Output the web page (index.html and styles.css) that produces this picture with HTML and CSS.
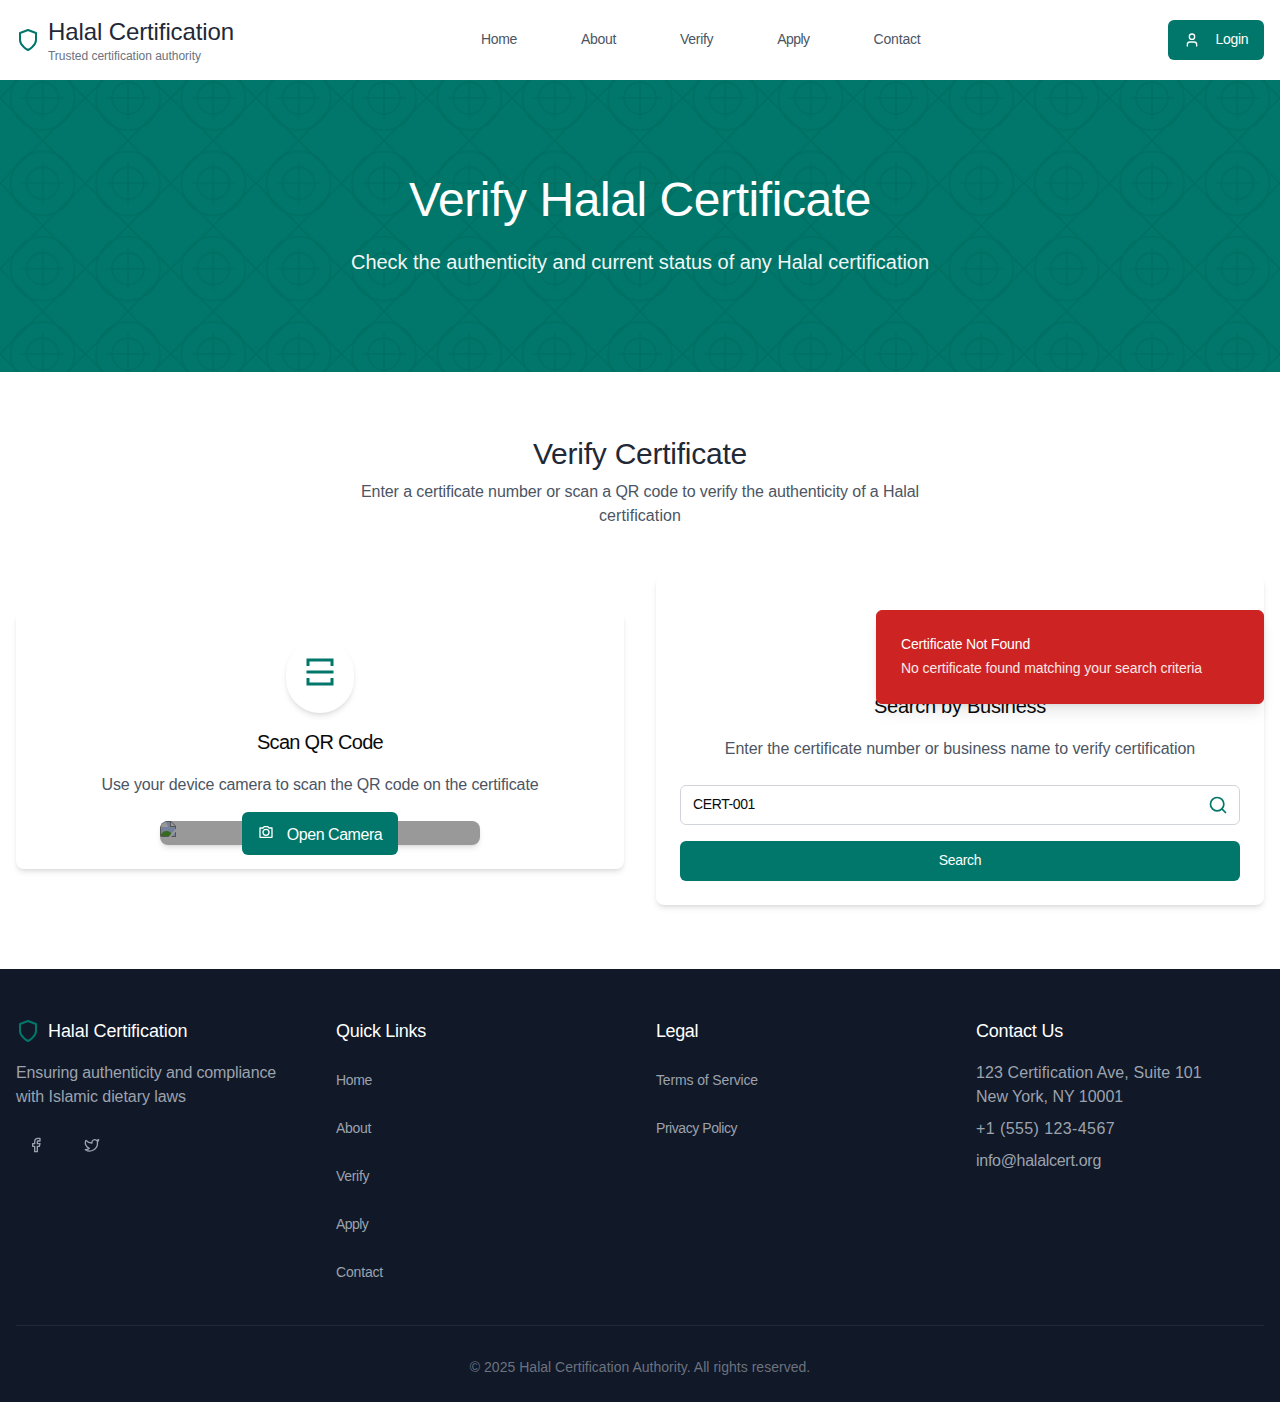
FILE: index.html
```html
<!DOCTYPE html>
<html lang="en">
<head>
<meta charset="utf-8">
<title>Verify Halal Certificate</title>
<link rel="stylesheet" href="styles.css">
</head>
<body>
<svg width="0" height="0" class="sprite" aria-hidden="true">
  <symbol id="shield" viewBox="0 0 24 24"><path d="M12 22s8-4 8-10V5l-8-3-8 3v7c0 6 8 10 8 10z"/></symbol>
</svg>
<header class="header">
  <div class="brand">
    <svg class="icon i24 green"><use href="#shield"/></svg>
    <div><div class="brand-name">Halal Certification</div><div class="brand-sub">Trusted certification authority</div></div>
  </div>
  <nav class="nav">
    <a class="w-home">Home</a><a class="w-about">About</a><a class="w-verify">Verify</a><a class="w-apply">Apply</a><a class="w-contact">Contact</a>
  </nav>
  <button class="btn login">
    <svg class="icon i16" viewBox="0 0 24 24"><path d="M19 21v-2a4 4 0 0 0-4-4H9a4 4 0 0 0-4 4v2"/><circle cx="12" cy="7" r="4"/></svg>
    <span>Login</span>
  </button>
</header>

<section class="hero">
  <svg class="pattern" width="1280" height="292" aria-hidden="true">
    <defs>
      <pattern id="tiles" width="85.3333" height="85.3333" patternUnits="userSpaceOnUse" y="-24.6667" viewBox="0 0 80 80">
        <g fill="none" stroke="#000">
          <path d="M40 0L80 40L40 80L0 40Z"/>
          <circle cx="40" cy="40" r="30"/><circle cx="40" cy="40" r="15"/>
          <path d="M40 20V60M20 40H60"/>
        </g>
      </pattern>
    </defs>
    <rect width="1280" height="292" fill="url(#tiles)"/>
  </svg>
  <h1>Verify Halal Certificate</h1>
  <p>Check the authenticity and current status of any Halal certification</p>
</section>

<main class="main">
  <div class="intro">
    <h2>Verify Certificate</h2>
    <p>Enter a certificate number or scan a QR code to verify the authenticity of a Halal<br><span class="intro-end">certification</span></p>
  </div>
  <div class="cards">
    <div class="card">
      <div class="disc"><svg class="solid i36 green" viewBox="0 0 24 24"><path d="M21 16v5H3v-5h2v3h14v-3h2zM3 11h18v2H3v-2zm18-3h-2V5H5v3H3V3h18v5z"/></svg></div>
      <h3 class="w-scan">Scan QR Code</h3>
      <p class="w-use">Use your device camera to scan the QR code on the certificate</p>
      <div class="preview">
        <svg class="broken" width="16" height="16" viewBox="0 0 16 16">
          <path d="M0 0H11L16 5V16H0Z" fill="#555"/>
          <path d="M1 1H10V6H15V15H1Z" fill="#75819a"/>
          <path d="M2.500 6a1.500 1.500 0 0 1 .5-3A2 2 0 0 1 7 4a1 1 0 0 1 0 2Z" fill="#999"/>
          <path d="M1 15V13.500C3 9.500 8 9 11 12V15Z" fill="#356b20"/>
          <path d="M16 7.500L8.500 16H11L16 10.500Z" fill="#999"/>
          <path d="M11 1V5H15Z" fill="#999"/>
        </svg>
        <button class="btn camera">
          <svg class="solid i16" viewBox="0 0 24 24"><path d="M9.828 5l-2 2H4v12h16V7h-3.828l-2-2H9.828zM9 3h6l2 2h4a1 1 0 0 1 1 1v14a1 1 0 0 1-1 1H3a1 1 0 0 1-1-1V6a1 1 0 0 1 1-1h4l2-2zm3 15a5.500 5.500 0 1 1 0-11 5.500 5.500 0 0 1 0 11zm0-2a3.500 3.500 0 1 0 0-7 3.500 3.500 0 0 0 0 7z"/></svg>
          <span>Open Camera</span>
        </button>
      </div>
    </div>
    <div class="card">
      <div class="disc"></div>
      <h3 class="w-business">Search by Business</h3>
      <p class="w-enter">Enter the certificate number or business name to verify certification</p>
      <div class="field">
        <span>CERT-001</span>
        <svg class="icon i20 green" viewBox="0 0 24 24"><circle cx="11" cy="11" r="8"/><path d="M21 21l-4.300-4.300"/></svg>
      </div>
      <button class="btn search"><span>Search</span></button>
    </div>
  </div>
  <div class="toast" role="alert">
    <div class="toast-title">Certificate Not Found</div>
    <div class="toast-text">No certificate found matching your search criteria</div>
  </div>
</main>

<footer class="footer">
  <div class="columns">
    <div>
      <h4 class="foot-brand"><svg class="icon i24 green"><use href="#shield"/></svg><span>Halal Certification</span></h4>
      <p class="w-ensuring">Ensuring authenticity and compliance</p><p class="w-islamic">with Islamic dietary laws</p>
      <div class="social">
        <a><svg class="icon i16" viewBox="0 0 24 24"><path d="M18 2h-3a5 5 0 0 0-5 5v3H7v4h3v8h4v-8h3l1-4h-4V7a1 1 0 0 1 1-1h3z"/></svg></a>
        <a><svg class="icon i16" viewBox="0 0 24 24"><path d="M22 4s-.7 2.1-2 3.4c1.6 10-9.4 17.3-18 11.6 2.2.1 4.4-.6 6-2C3 15.5.5 9.6 3 5c2.2 2.6 5.6 4.1 9 4-.9-4.2 4-6.6 7-3.8 1.1 0 3-1.2 3-1.2z"/></svg></a>
      </div>
    </div>
    <div>
      <h4 class="w-quick">Quick Links</h4>
      <div class="links"><a class="w-home">Home</a><a class="w-about">About</a><a class="w-verify">Verify</a><a class="w-apply">Apply</a><a class="w-contact">Contact</a></div>
    </div>
    <div>
      <h4 class="w-legal">Legal</h4>
      <div class="links"><a class="w-terms">Terms of Service</a><a class="w-privacy">Privacy Policy</a></div>
    </div>
    <div>
      <h4 class="w-us">Contact Us</h4>
      <p class="w-street">123 Certification Ave, Suite 101</p><p class="w-city">New York, NY 10001</p>
      <p class="next w-phone">+1 (555) 123-4567</p>
      <p class="next w-mail">info@halalcert.org</p>
    </div>
  </div>
  <div class="copyright">© 2025 Halal Certification Authority. All rights reserved.</div>
</footer>
</body>
</html>
```
FILE: styles.css
```css
* { box-sizing: border-box; margin: 0; padding: 0; }
body { font: 16px/24px "Liberation Sans", Arial, sans-serif; color: #020817; background: #fff; }
h1, h2, h3, h4 { font-weight: 400; }
a, h1, h2, h3, h4, p, span { white-space: nowrap; }
svg { display: block; flex: none; }
.sprite { position: absolute; }
.icon { fill: none; stroke: currentColor; stroke-width: 2; stroke-linecap: round; stroke-linejoin: round; }
.solid { fill: currentColor; }
.i16 { width: 16px; height: 16px; }
.i20 { width: 20px; height: 20px; }
.i24 { width: 24px; height: 24px; }
.i36 { width: 36px; height: 36px; }
.green { color: #00776a; }
.btn { display: flex; align-items: center; justify-content: center; border: 0; border-radius: 6px; background: #00776a; color: #fff; font: 14px/20px "Liberation Sans", Arial, sans-serif; height: 40px; }
.btn span { padding-bottom: 2px; }

.header { height: 80px; padding: 0 16px; display: grid; grid-template-columns: 465px 1fr 96px; align-items: center; }
.brand { display: flex; align-items: center; gap: 8px; }
.brand-name { font-size: 24px; line-height: 32px; color: #1f2937; letter-spacing: -.109px; }
.brand-sub { font-size: 12px; line-height: 16px; color: #6b7280; letter-spacing: -.02px; }
.nav { display: flex; gap: 64px; padding-bottom: 2px; font-size: 14px; line-height: 20px; color: #4b5563; }
.login { width: 96px; padding-left: 16px; gap: 15.5px; justify-content: flex-start; letter-spacing: -.3px; }

.hero { position: relative; height: 292px; padding: 96px 0; background: #00776a; color: #fff; text-align: center; overflow: hidden; }
.pattern { position: absolute; left: 0; top: 0; opacity: .08; }
.hero h1 { position: relative; font-size: 48px; line-height: 48px; letter-spacing: -.424px; margin-bottom: 24px; }
.hero p { position: relative; font-size: 20px; line-height: 28px; letter-spacing: -.034px; opacity: .95; }

.main { position: relative; padding: 64px 16px; height: 597px; }
.intro { text-align: center; color: #4b5563; letter-spacing: -.093px; margin-bottom: 48px; }
.intro h2 { font-size: 30px; line-height: 36px; color: #1f2937; letter-spacing: -.245px; margin-bottom: 8px; }
.intro-end { letter-spacing: .083px; }
.cards { display: grid; grid-template-columns: 1fr 1fr; gap: 32px; align-items: center; }
.card { padding: 24px; border-radius: 8px; background: #fff; text-align: center; box-shadow: 0 4px 6px -1px rgba(0,0,0,.1), 0 2px 4px -2px rgba(0,0,0,.1); }
.disc { width: 68px; height: 74px; padding: 15px 15.5px; margin: 3px auto 15px; border-radius: 34px; background: #fff; box-shadow: 0 4px 6px -1px rgba(0,0,0,.1), 0 2px 4px -2px rgba(0,0,0,.1); }
.card h3 { font-size: 20px; line-height: 28px; color: #0a0a0a; margin-bottom: 17px; }
.card p { color: #4b5563; margin-bottom: 24px; }
.preview { position: relative; width: 320px; height: 24px; margin: 0 auto; border-radius: 8px; background: #999; box-shadow: 0 4px 6px -1px rgba(0,0,0,.1), 0 2px 4px -2px rgba(0,0,0,.1); }
.broken { border-radius: 8px 0 0 2px; overflow: hidden; }
.camera { position: absolute; left: 82px; top: -9px; width: 156px; height: 43px; gap: 13px; font-size: 16px; line-height: 24px; letter-spacing: -.454px; }
.camera svg { margin-bottom: 3px; }
.camera span { padding: 3px 0 0; }
.field { display: flex; align-items: center; justify-content: space-between; height: 40px; padding: 0 11px 0 12px; border: 1px solid #d1d5db; border-radius: 6px; margin-bottom: 16px; font-size: 14px; letter-spacing: -.388px; color: #0a0a0a; }
.field span { padding-bottom: 2px; }
.search { width: 100%; letter-spacing: -.31px; }
.toast { position: absolute; right: 16px; top: 238px; width: 388px; height: 94px; padding: 23px 24px; border: 1px solid #ce2323; border-radius: 6px; background: #ce2323; color: #fff; font-size: 14px; line-height: 20px; box-shadow: 0 10px 15px -3px rgba(0,0,0,.1), 0 4px 6px -4px rgba(0,0,0,.1); }
.toast-title { letter-spacing: -.156px; margin-bottom: 4px; }
.toast-text { letter-spacing: -.065px; opacity: .9; }

.footer { height: 433px; padding: 48px 16px 24px; background: #111827; color: #9ca3af; }
.columns { display: grid; grid-template-columns: repeat(4, 1fr); gap: 32px; margin-bottom: 32px; }
.footer h4 { font-size: 18px; line-height: 28px; color: #fff; margin-bottom: 16px; }
.footer .foot-brand { display: flex; align-items: center; gap: 8px; letter-spacing: -.082px; }
.social { display: flex; gap: 16px; margin-top: 16px; }
.social a { width: 40px; height: 40px; display: grid; place-items: center; }
.links { display: grid; gap: 8px; font-size: 14px; line-height: 38px; }
.links a { height: 40px; }
.next { margin-top: 8px; }
.copyright { border-top: 1px solid #1f2937; padding-top: 31px; text-align: center; font-size: 14px; line-height: 20px; color: #6b7280; letter-spacing: .02px; }

/* optical tracking per label */
.w-home { letter-spacing: -.336px; }
.w-about { letter-spacing: -.317px; }
.w-verify { letter-spacing: -.3px; }
.w-apply { letter-spacing: -.55px; }
.w-contact { letter-spacing: -.17px; }
.w-scan { letter-spacing: -.709px; }
.w-use { letter-spacing: -.126px; }
.w-business { letter-spacing: -.264px; }
.w-enter { letter-spacing: -.038px; }
.w-ensuring { letter-spacing: -.14px; }
.w-islamic { letter-spacing: -.064px; }
.w-quick { letter-spacing: -.276px; }
.w-legal { letter-spacing: -.408px; }
.w-us { letter-spacing: -.203px; }
.w-terms { letter-spacing: -.141px; }
.w-privacy { letter-spacing: -.438px; }
.w-street { letter-spacing: .09px; }
.w-city { letter-spacing: -.01px; }
.w-phone { letter-spacing: .406px; }
.w-mail { letter-spacing: -.283px; }
```
